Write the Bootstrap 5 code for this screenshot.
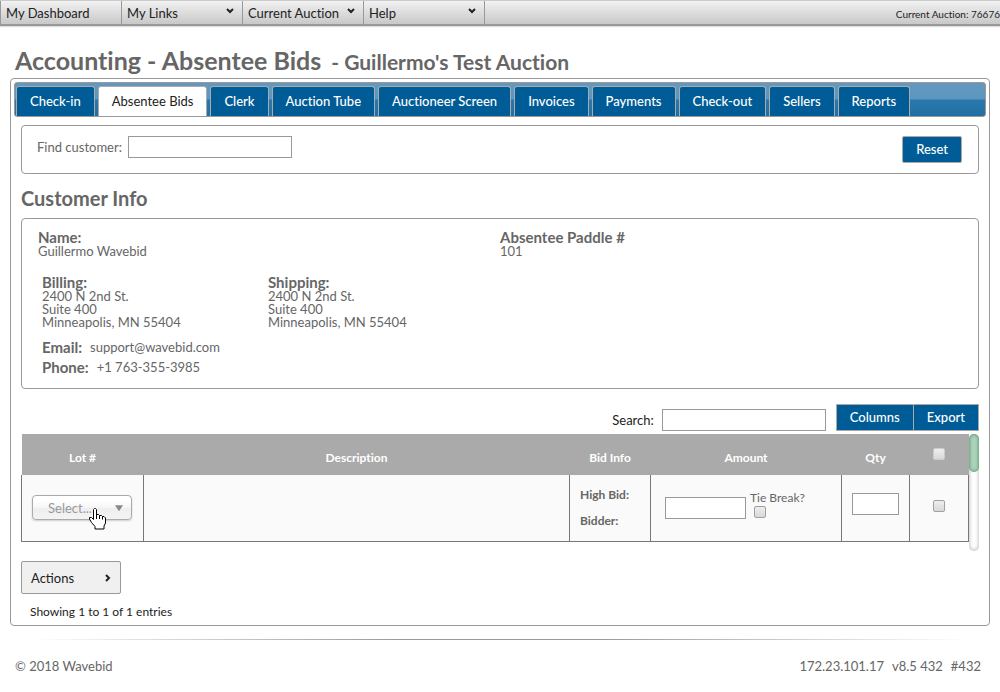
<!DOCTYPE html>
<html lang="en">
<head>
<meta charset="utf-8">
<meta name="viewport" content="width=device-width, initial-scale=1">
<title>Accounting - Absentee Bids</title>
<link href="https://cdn.jsdelivr.net/npm/bootstrap@5.3.0/dist/css/bootstrap.min.css" rel="stylesheet">
<style>
:root { --line: #999; --ink: #666; --dark: #222; --blue: #005c96; }
body { font: 13px/16px Lato, "Trebuchet MS", sans-serif; font-variant-ligatures: none; color: var(--ink); background: #fff; }

.topbar { min-height: 26px; background: linear-gradient(#f2f2f2, #c8c8c8); border-top: 1px solid #ccc; border-bottom: 2px solid #999; box-shadow: 0 1px 1px #ddd; }
.topbar a { width: 121px; padding: 0 8px 0 5px; border-left: 1px solid var(--line); color: var(--dark); }
.topbar .chev { margin-bottom: 4px; }
.auction-id { font-size: 10px; border-left: 1px solid var(--line); color: var(--dark); padding-top: 2px; }
.chev { width: 8px; height: 6px; flex: none; fill: none; stroke: #222; stroke-width: 2; }

.page { padding: 0 10px; }
h1 { font-size: 25px; line-height: 30px; font-weight: 700; padding: 19px 0 1px 5px; }
h1 .sub { font-size: 21px; }
h2 { font-size: 20px; line-height: 24px; font-weight: 700; margin: 12px 0 8px; }
.frame, .box { border: 1px solid var(--line); border-radius: 4px; }
.frame { padding: 3px; }

.tabs { height: 35px; border: 1px solid var(--line); border-radius: 3px; background: linear-gradient(#6399c0, #5c96be 48%, #2a78ad 52%, #236fa4); padding: 3px 1px 0; gap: 3px; }
.tabs .nav-link { height: 30px; padding: 0 13px; line-height: 28px; border: 1px solid #aaa; border-bottom: 0; border-radius: 3px 3px 0 0; background: var(--blue); color: #fff; font-weight: 500; white-space: nowrap; }
.tabs .nav-link.active { background: #fff; color: var(--dark); font-weight: 400; }

.content { padding: 8px 7px 0; }
.field { height: 22px; border: 1px solid var(--line); border-radius: 0; background: #fff; padding: 0 4px; }
.field-wide { width: 164px; }
.blue-btn { background: var(--blue); color: #fff; border: 1px solid #aaa; font-weight: 500; font-size: 13px; line-height: 15px; border-radius: 2px; padding: 5px 13px; }
.blue-btn:hover { background: #014b7a; color: #fff; }
.find { padding: 10px 16px 10px 15px; }
.find-row { gap: 6px; }

.info { padding: 12px 16px 11px; line-height: 13px; }
.info b { font-size: 15px; }
.addresses { margin-top: 18px; }
.address { width: 226px; }
.contact > div { height: 20px; }

.tools { padding: 15px 0 3px; }
.tools .blue-btn { border-radius: 0; }
.tools .btn-group { margin-left: 10px; }
.tools label { color: var(--dark); }

.bids { table-layout: fixed; font-size: 12px; }
.bids th { background: #aaa; color: #fff; height: 41px; text-align: center; padding: 6px 0 0; }
.bids td { background: #fafafa; border: 1px solid #777; border-top: 0; height: 66px; padding: 0 10px; }
.bid-labels { gap: 10px; }
.tick { appearance: none; width: 12px; height: 12px; border: 1px solid #a0a0a0; border-radius: 2px; background: linear-gradient(#eee, #d8d8d8); }
.tick-plain { border-color: #ccc; }

.pick { position: relative; width: 100px; }
.pick select { appearance: none; width: 100%; height: 25px; border: 1px solid #aaa; border-radius: 4px; color: #999; font-size: 13px; padding: 0 15px; background: linear-gradient(#fff 20%, #f6f6f6 50%, #eee 52%, #f4f4f4); box-shadow: 0 1px 2px #ccc; }
.arrow { position: absolute; right: 9px; top: 10px; width: 8px; height: 6px; background: #888; clip-path: polygon(0 0, 100% 0, 50% 100%); }
.pointer { position: absolute; left: 57px; top: 13px; pointer-events: none; }

.track { flex: none; width: 10px; height: 117px; border-radius: 5px; background: #fff; box-shadow: inset 0 0 4px #aaa; }
.thumb { height: 38px; border-radius: 5px; background: #abd3b9; box-shadow: inset 0 0 3px 1px #6c9a7c; }

.actions { width: 100px; height: 33px; border: 1px solid var(--line); border-radius: 2px; background: #f0f0f0; color: var(--dark); padding: 0 9px; margin-top: 10px; }
.status { font-size: 12px; color: var(--dark); padding: 10px 9px 2px; }
.rule { height: 1px; margin: 13px 0 18px; background: linear-gradient(90deg, #fff 2%, #999 40%, #999 60%, #fff 98%); }
footer { padding: 0 9px 16px 5px; }
</style>
</head>
<body>
<nav class="topbar d-flex align-items-stretch" aria-label="Main">
  <a href="#" class="d-flex align-items-center text-decoration-none">My Dashboard</a>
  <a href="#" class="d-flex align-items-center justify-content-between text-decoration-none">My Links <svg class="chev" viewBox="0 0 8 6"><path d="M1 1l3 3 3-3"/></svg></a>
  <a href="#" class="d-flex align-items-center justify-content-between text-decoration-none text-nowrap">Current Auction <svg class="chev" viewBox="0 0 8 6"><path d="M1 1l3 3 3-3"/></svg></a>
  <a href="#" class="d-flex align-items-center justify-content-between text-decoration-none">Help <svg class="chev" viewBox="0 0 8 6"><path d="M1 1l3 3 3-3"/></svg></a>
  <div class="auction-id flex-grow-1 d-flex align-items-center justify-content-end text-nowrap">Current Auction: 76676</div>
</nav>

<main class="page">
  <h1 class="m-0 text-nowrap">Accounting - Absentee Bids <span class="sub ms-1">- Guillermo's Test Auction</span></h1>
  <div class="frame">
    <ul class="nav tabs flex-nowrap">
      <li><a class="nav-link" href="#">Check-in</a></li>
      <li><a class="nav-link active" aria-current="page" href="#">Absentee Bids</a></li>
      <li><a class="nav-link" href="#">Clerk</a></li>
      <li><a class="nav-link" href="#">Auction Tube</a></li>
      <li><a class="nav-link" href="#">Auctioneer Screen</a></li>
      <li><a class="nav-link" href="#">Invoices</a></li>
      <li><a class="nav-link" href="#">Payments</a></li>
      <li><a class="nav-link" href="#">Check-out</a></li>
      <li><a class="nav-link" href="#">Sellers</a></li>
      <li><a class="nav-link" href="#">Reports</a></li>
    </ul>

    <div class="content">
      <form class="box find d-flex justify-content-between align-items-start">
        <div class="find-row d-flex align-items-center">
          <label for="find">Find customer:</label>
          <input class="field field-wide" id="find" type="text">
        </div>
        <button class="btn blue-btn" type="reset">Reset</button>
      </form>

      <h2>Customer Info</h2>
      <section class="box info">
        <div class="row g-0">
          <div class="col-6"><b>Name:</b><br>Guillermo Wavebid</div>
          <div class="col-6"><b>Absentee Paddle #</b><br>101</div>
        </div>
        <div class="addresses d-flex ps-1">
          <div class="address"><b>Billing:</b><br>2400 N 2nd St.<br>Suite 400<br>Minneapolis, MN 55404</div>
          <div class="address"><b>Shipping:</b><br>2400 N 2nd St.<br>Suite 400<br>Minneapolis, MN 55404</div>
        </div>
        <div class="contact mt-2 ps-1">
          <div class="d-flex align-items-center"><b class="me-2">Email:</b>support@wavebid.com</div>
          <div class="d-flex align-items-center"><b class="me-2">Phone:</b>+1 763-355-3985</div>
        </div>
      </section>

      <div class="tools d-flex justify-content-end align-items-center">
        <label for="search" class="me-2 mt-1">Search:</label>
        <input class="field field-wide mt-1" id="search" type="search">
        <div class="btn-group">
          <button class="btn blue-btn" type="button">Columns</button>
          <button class="btn blue-btn" type="button">Export</button>
        </div>
      </div>

      <div class="d-flex align-items-start">
        <div class="flex-grow-1">
          <table class="bids w-100">
            <colgroup><col style="width:122px"><col><col style="width:81px"><col style="width:191px"><col style="width:68px"><col style="width:59px"></colgroup>
            <thead>
              <tr><th>Lot #</th><th>Description</th><th>Bid Info</th><th>Amount</th><th>Qty</th><th><input class="tick tick-plain mb-1" type="checkbox" aria-label="Select all"></th></tr>
            </thead>
            <tbody>
              <tr>
                <td>
                  <div class="pick">
                    <select aria-label="Lot"><option>Select...</option></select>
                    <span class="arrow"></span>
                    <svg class="pointer" width="17" height="22" viewBox="0 0 17 22"><path d="M5.500 .5h1l1 1V6.500h2l1 1h2l1 1h1.500l1.500 1.500v5l-1.500 3v3h-9v-2.500L2.500 14.500.5 11v-1.500h2l2 2V1.500z" fill="#fff" stroke="#000"/><path d="M7.500 6v5M10.500 7.500v3.500M13.500 8.500v3" stroke="#000"/></svg>
                  </div>
                </td>
                <td></td>
                <td><div class="bid-labels d-grid"><b>High Bid:</b><b>Bidder:</b></div></td>
                <td>
                  <div class="d-flex align-items-center">
                    <input class="field ms-1" style="width:81px" type="text" aria-label="Amount">
                    <div class="ms-1 mb-2"><label for="tie">Tie Break?</label><input class="tick d-block ms-1" id="tie" type="checkbox"></div>
                  </div>
                </td>
                <td><input class="field d-block w-100 mb-2" type="text" aria-label="Quantity"></td>
                <td class="text-center"><input class="tick" type="checkbox" aria-label="Select row"></td>
              </tr>
            </tbody>
          </table>
        </div>
        <div class="track"><div class="thumb"></div></div>
      </div>

      <button class="actions d-flex align-items-center justify-content-between" type="button">Actions <svg width="6" height="8" viewBox="0 0 6 8"><path d="M1 1l3 3-3 3" fill="none" stroke="#222" stroke-width="2"/></svg></button>
      <div class="status">Showing 1 to 1 of 1 entries</div>
    </div>
  </div>

  <div class="rule"></div>
  <footer class="d-flex justify-content-between">
    <span>© 2018 Wavebid</span>
    <span class="d-flex gap-2"><span>172.23.101.17</span><span>v8.5 432</span><span>#432</span></span>
  </footer>
</main>
<script src="https://cdn.jsdelivr.net/npm/bootstrap@5.3.0/dist/js/bootstrap.bundle.min.js"></script>
</body>
</html>
